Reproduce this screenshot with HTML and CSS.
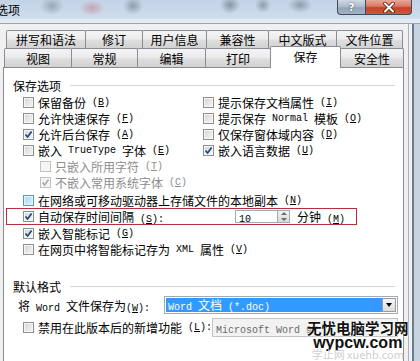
FILE: index.html
```html
<!DOCTYPE html>
<html lang="zh-CN">
<head>
<meta charset="utf-8">
<title>选项</title>
<link rel="stylesheet" href="styles.css">
</head>
<body>
<div class="window">
  <div class="titlebar">
    <span class="title">选项</span>
    <div class="caption">
      <span class="cap help">?</span>
      <span class="cap close"><svg width="14" height="11" viewBox="0 0 14 11"><path d="M3 1.5 L11 9.5 M11 1.5 L3 9.5" stroke="#5a1a10" stroke-width="3.6" stroke-linecap="round"/><path d="M3 1.5 L11 9.5 M11 1.5 L3 9.5" stroke="#ffffff" stroke-width="2" stroke-linecap="round"/></svg></span>
    </div>
  </div>
  <div class="client">
    <div class="dialog">
      <div class="tabrow r1">
        <span class="tab a1">拼写和语法</span>
        <span class="tab a2">修订</span>
        <span class="tab a3">用户信息</span>
        <span class="tab a4">兼容性</span>
        <span class="tab a5">中文版式</span>
        <span class="tab a6">文件位置</span>
      </div>
      <div class="tabrow r2">
        <span class="tab b1">视图</span>
        <span class="tab b2">常规</span>
        <span class="tab b3">编辑</span>
        <span class="tab b4">打印</span>
        <span class="tab b5 sel-tab">保存</span>
        <span class="tab b6">安全性</span>
      </div>
      <div class="panel">
        <div class="grp"><span>保存选项</span><span class="line"></span></div>
        <div class="cols">
          <div class="row"><span class="cb"></span>保留备份<span class="m"> (<u>B</u>)</span></div>
          <div class="row"><span class="cb"></span>提示保存文档属性<span class="m"> (<u>I</u>)</span></div>
          <div class="row"><span class="cb"></span>允许快速保存<span class="m"> (<u>F</u>)</span></div>
          <div class="row"><span class="cb"></span>提示保存<span class="m"> Normal </span>模板<span class="m"> (<u>O</u>)</span></div>
          <div class="row"><span class="cb on"><svg width="9" height="9" viewBox="0 0 9 9"><path d="M1.5 4.5 L3.6 7 L7.6 1.5" fill="none" stroke="#1f3f7a" stroke-width="1.6"/></svg></span>允许后台保存<span class="m"> (<u>A</u>)</span></div>
          <div class="row"><span class="cb"></span>仅保存窗体域内容<span class="m"> (<u>D</u>)</span></div>
          <div class="row"><span class="cb"></span>嵌入<span class="m"> TrueType </span>字体<span class="m"> (<u>E</u>)</span></div>
          <div class="row"><span class="cb on"><svg width="9" height="9" viewBox="0 0 9 9"><path d="M1.5 4.5 L3.6 7 L7.6 1.5" fill="none" stroke="#1f3f7a" stroke-width="1.6"/></svg></span>嵌入语言数据<span class="m"> (<u>U</u>)</span></div>
        </div>
        <div class="row sub"><span class="cb dis"></span>只嵌入所用字符<span class="m"> (<u>T</u>)</span></div>
        <div class="row sub"><span class="cb dis"><svg width="9" height="9" viewBox="0 0 9 9"><path d="M1.5 4.5 L3.6 7 L7.6 1.5" fill="none" stroke="#a8a8a8" stroke-width="1.5"/></svg></span>不嵌入常用系统字体<span class="m"> (<u>C</u>)</span></div>
        <div class="row pl net"><span class="cb hot"></span>在网络或可移动驱动器上存储文件的本地副本<span class="m"> (<u>N</u>)</span></div>
        <div class="row auto">
          <span class="cb on"><svg width="9" height="9" viewBox="0 0 9 9"><path d="M1.5 4.5 L3.6 7 L7.6 1.5" fill="none" stroke="#1f3f7a" stroke-width="1.6"/></svg></span>
          <span class="lbl">自动保存时间间隔<span class="m"> (<u>S</u>):</span></span>
          <span class="field"><span class="m">10</span></span>
          <span class="spin"><span class="up"></span><span class="dn"></span></span>
          <span class="unit">分钟<span class="m"> (<u>M</u>)</span></span>
        </div>
        <div class="row pl"><span class="cb on"><svg width="9" height="9" viewBox="0 0 9 9"><path d="M1.5 4.5 L3.6 7 L7.6 1.5" fill="none" stroke="#1f3f7a" stroke-width="1.6"/></svg></span>嵌入智能标记<span class="m"> (<u>G</u>)</span></div>
        <div class="row pl"><span class="cb"></span>在网页中将智能标记存为<span class="m"> XML </span>属性<span class="m"> (<u>V</u>)</span></div>

        <div class="grp grp2"><span>默认格式</span><span class="line"></span></div>
        <div class="row wordrow">
          <span>将<span class="m"> Word </span>文件保存为<span class="m">(<u>W</u>):</span></span>
          <span class="select"><span class="val"><span class="m">Word </span>文档<span class="m"> (*.doc)</span></span><span class="dd"><span class="tri"></span></span></span>
        </div>
        <div class="row pl disrow">
          <span class="cb"></span>禁用在此版本后的新增功能<span class="m"> (<u>L</u>):</span>
          <span class="combo"><span class="m">Microsoft Word 97</span></span>
        </div>
      </div>
    </div>
    <div class="frame"></div>
  </div>
  <div class="watermark">
    <div class="wm1">无忧电脑学习网</div>
    <div class="wm2">wypcw.com</div>
    <div class="wm3">学止网 xuehb.com</div>
  </div>
</div>
</body>
</html>
```
FILE: styles.css
```css
html, body {
  margin: 0;
  padding: 0;
}
body {
  width: 420px;
  height: 361px;
  overflow: hidden;
  font-family: "Noto Sans CJK SC", "Noto Sans", sans-serif;
  font-size: 12px;
  color: #000;
  background: #f0f0f0;
}
.window {
  position: relative;
  width: 420px;
  height: 361px;
  display: flex;
  flex-direction: column;
}
.titlebar {
  height: 23px;
  flex: none;
  display: flex;
  justify-content: space-between;
  align-items: flex-start;
  background:
    radial-gradient(ellipse 12px 9px at 52px 6px, rgba(70, 80, 95, 0.35), transparent),
    radial-gradient(ellipse 12px 8px at 92px 8px, rgba(190, 70, 70, 0.35), transparent),
    radial-gradient(ellipse 10px 9px at 133px 6px, rgba(60, 70, 90, 0.4), transparent),
    radial-gradient(ellipse 10px 9px at 230px 5px, rgba(60, 70, 90, 0.45), transparent),
    radial-gradient(ellipse 8px 8px at 263px 5px, rgba(60, 70, 90, 0.4), transparent),
    radial-gradient(ellipse 12px 8px at 300px 5px, rgba(60, 70, 90, 0.4), transparent),
    linear-gradient(#c3d3e6, #cfdcec 80%, #e3eaf3 85%, #e6ecf4);
}
.title {
  margin-left: -4px;
  line-height: 20px;
  font-size: 12px;
}
.caption {
  display: flex;
  margin-right: 8px;
}
.cap {
  height: 15px;
  box-sizing: border-box;
  border: 1px solid #3e4c5e;
  border-top: none;
  display: flex;
  align-items: center;
  justify-content: center;
}
.help {
  width: 28px;
  border-radius: 0 0 0 4px;
  border-right: none;
  background: linear-gradient(#d0dae6, #a9b8ca 50%, #93a5ba 55%, #a3b3c6);
  color: #fff;
  font-family: "DejaVu Sans", sans-serif;
  font-weight: bold;
  font-size: 11px;
  text-shadow: 0 0 2px #334;
}
.close {
  width: 47px;
  border-radius: 0 0 4px 0;
  background: linear-gradient(#e9a89b, #d77763 45%, #c4412a 55%, #d2563d);
}
.client {
  flex: 1;
  display: flex;
  border-top: 1px solid #9aa7b6;
}
.dialog {
  width: 408px;
  flex: none;
  display: flex;
  flex-direction: column;
  background: #f0f0f0;
  padding-top: 6px;
  box-sizing: border-box;
}
.frame {
  flex: 1;
  background: linear-gradient(to right, #a7b2be 0, #a7b2be 1px, #eef2f7 1px, #eef2f7 4px, #6e7b88 4px, #6e7b88 6px, #c7d3e0 6px, #c7d3e0 100%);
}
.tabrow {
  display: flex;
  align-items: flex-start;
}
.r1 {
  height: 18px;
  margin-left: 6px;
}
.r2 {
  height: 19px;
  margin-left: 4px;
}
.tab {
  box-sizing: border-box;
  height: 100%;
  border: 1px solid #898c95;
  border-bottom: none;
  border-radius: 2px 2px 0 0;
  background: linear-gradient(#f4f4f4, #ececec 45%, #dedede 55%, #d2d2d2);
  text-align: center;
  line-height: 17px;
  margin-left: -1px;
  position: relative;
}
.tab:first-child { margin-left: 0; }
.r2 .tab { line-height: 19px; }
.a1 { width: 80px; }
.a2 { width: 58px; }
.a3 { width: 65px; }
.a4 { width: 63px; }
.a5 { width: 69px; }
.a6 { width: 67px; }
.b1 { width: 68px; }
.b2 { width: 67px; }
.b3 { width: 69px; }
.b4 { width: 66px; }
.b5 { width: 71px; }
.b6 { width: 64px; }
.r2 .sel-tab {
  height: 22px;
  margin-top: -2px;
  background: #ffffff;
  z-index: 3;
  line-height: 20px;
}
.panel {
  flex: 1;
  margin-left: 3px;
  width: 401px;
  box-sizing: border-box;
  border: 1px solid #898c95;
  border-bottom: none;
  background: #ffffff;
  padding-top: 9px;
  position: relative;
  z-index: 1;
}
.grp {
  display: flex;
  align-items: center;
  height: 16px;
  padding-left: 9px;
  margin-bottom: 1px;
}
.grp .line {
  flex: 1;
  border-top: 1px solid #d6d6d6;
  margin: 1px 8px 0 9px;
}
.grp2 {
  margin-top: 21px;
  margin-bottom: 0;
}
.cols {
  display: grid;
  grid-template-columns: 180px 1fr;
  grid-auto-rows: 16px;
  padding-left: 19px;
}
.row {
  display: flex;
  align-items: center;
  height: 16px;
  white-space: nowrap;
}
.pl { padding-left: 19px; }
.sub {
  padding-left: 36px;
  color: #8d8d8d;
}
.net { margin-top: 2px; }
.m {
  font-family: "Liberation Mono", monospace;
  font-size: 10px;
  white-space: pre;
}
.cb {
  width: 11px;
  height: 11px;
  flex: none;
  box-sizing: border-box;
  border: 1px solid #8e8f8f;
  background: linear-gradient(135deg, #d2d4d8, #f7f7f7);
  box-shadow: inset 0 0 0 1px #f6f6f6;
  margin-right: 4px;
  display: flex;
  align-items: center;
  justify-content: center;
}
.cb.dis {
  border-color: #c2c2c2;
  background: #f4f4f4;
}
.cb.hot {
  border-color: #5c95c4;
  background: linear-gradient(135deg, #a9d6f5, #dff1fc);
  box-shadow: inset 0 0 0 1px #e8f5fd;
}
.auto {
  margin-left: 2px;
  width: 351px;
  height: 17px;
  box-sizing: border-box;
  border: 1px solid #b3303c;
  padding-left: 16px;
}
.lbl {
  width: 197px;
  flex: none;
}
.field {
  width: 42px;
  height: 13px;
  box-sizing: border-box;
  border: 1px solid #a5a9b0;
  border-right: none;
  background: #fff;
  padding-left: 3px;
  line-height: 11px;
  flex: none;
}
.spin {
  width: 13px;
  height: 13px;
  box-sizing: border-box;
  border: 1px solid #a5a9b0;
  display: flex;
  flex-direction: column;
  background: linear-gradient(#f3f3f3, #d9d9d9);
  flex: none;
  align-items: center;
  justify-content: space-around;
}
.spin .up, .spin .dn {
  width: 0;
  height: 0;
  border-left: 3px solid transparent;
  border-right: 3px solid transparent;
}
.spin .up { border-bottom: 3px solid #6b6b6b; }
.spin .dn { border-top: 3px solid #6b6b6b; }
.unit { margin-left: 7px; }
.wordrow {
  height: 18px;
  margin-top: 2px;
  padding-left: 14px;
}
.select {
  margin-left: auto;
  margin-right: 5px;
  width: 234px;
  height: 18px;
  box-sizing: border-box;
  border: 1px solid #a3aab2;
  background: #fff;
  padding: 1px;
  display: flex;
}
.select .val {
  flex: 1;
  background: #3399ff;
  color: #fff;
  padding-left: 2px;
  line-height: 14px;
}
.select .dd {
  width: 14px;
  box-sizing: border-box;
  border: 1px solid #9a9a9a;
  background: linear-gradient(#f5f5f5, #dcdcdc);
  display: flex;
  align-items: center;
  justify-content: center;
}
.tri {
  width: 0;
  height: 0;
  border-left: 3px solid transparent;
  border-right: 3px solid transparent;
  border-top: 4px solid #000;
}
.disrow {
  height: 19px;
  margin-top: 4px;
}
.combo {
  margin-left: auto;
  margin-right: 5px;
  width: 186px;
  height: 19px;
  box-sizing: border-box;
  border: 1px solid #c4c4c4;
  background: #f2f2f2;
  color: #6a6a6a;
  padding-left: 3px;
  line-height: 17px;
}
.watermark {
  position: absolute;
  left: 307px;
  top: 321px;
  z-index: 5;
  text-align: center;
  line-height: 1;
}
.wm1 {
  font-size: 14.5px;
  font-weight: bold;
  color: #111;
  text-shadow: 0 0 2px #fff, 0 0 2px #fff;
  white-space: nowrap;
}
.wm2 {
  font-family: "Liberation Sans", sans-serif;
  font-weight: bold;
  font-size: 16px;
  color: #111;
  margin-top: -1px;
  text-shadow: 0 0 2px #fff, 0 0 2px #fff;
}
.wm3 {
  font-size: 11px;
  color: #cfcfcf;
  margin-top: -2px;
  white-space: nowrap;
}
```
